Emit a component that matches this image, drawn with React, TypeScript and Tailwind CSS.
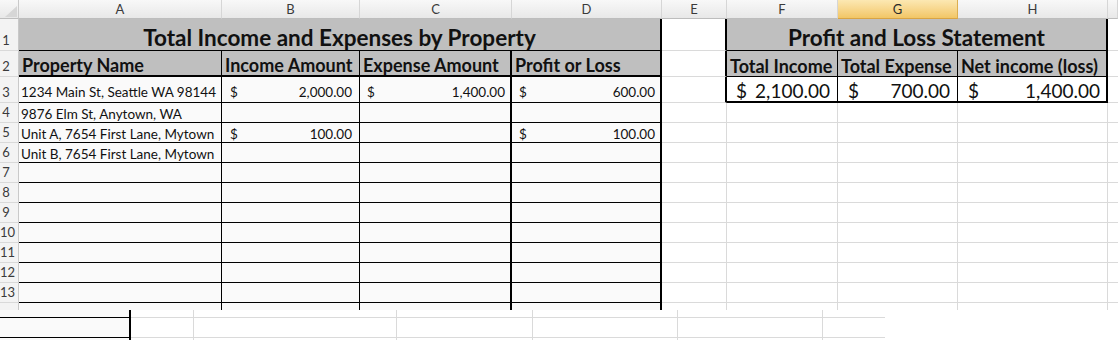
import React from "react";

const HDR =
  "flex items-center justify-center pt-[2px] border-r border-b border-r-[#d6d6d6] border-b-[#bdbdbd] bg-linear-to-b from-[#f8f8f8] to-[#e8e8e8] text-[13px] text-[#3a3a3a]";
const HDR_SEL =
  "flex items-center justify-center pt-[2px] border-r border-b border-r-[#dcae4f] border-b-[#d9a443] bg-linear-to-b from-[#fce8b2] to-[#f2c665] text-[13px] text-[#2a2a2a]";
const RH =
  "flex items-end justify-start pl-0 border-r border-b border-r-[#c9c9c9] border-b-[#d9d9d9] bg-[#f3f3f3] text-[13px] text-[#3a3a3a] leading-none";
const LIGHT = "border-r border-b border-r-[#dadada] border-b-[#dadada] bg-white";
const LIGHT_B = "border-b border-b-[#dadada] bg-white";
const GRAY = "bg-[#bfbfbf]";
const H2 = "flex items-end pl-[3px] pb-[1px] text-[18px] font-bold text-[#111] leading-none whitespace-nowrap";

function RowNum({ n }: { n: number }) {
  return (
    <div className={RH}>
      <span className="w-[12px] text-center pb-[3px] inline-block">{n}</span>
    </div>
  );
}

function Money({ v, cls }: { v: string; cls: string }) {
  return (
    <div className={cls}>
      <span>$</span>
      <span>{v}</span>
    </div>
  );
}

export default function App() {
  const emptyRows = [7, 8, 9, 10, 11, 12, 13];
  const dataBase = "bg-[#fafafa] border-b border-b-black flex items-end pb-[1px] text-[13.5px] leading-none text-[#111]";
  const aCls = dataBase + " border-r border-r-black pl-[2px] whitespace-nowrap overflow-hidden";
  const bCls = dataBase + " border-r border-r-black";
  const cdCls = dataBase + " border-r-2 border-r-black";

  return (
    <div className="w-[1118px] h-[340px] overflow-hidden bg-white font-['Lato',sans-serif]">
      <div className="grid grid-cols-[19px_203px_138px_152px_150px_65px_111px_120px_150px_10px] grid-rows-[19px_32px_26px_26px_repeat(10,20px)_7px]">
        {/* column headers */}
        <div className="relative border-r border-b border-r-[#c9c9c9] border-b-[#bdbdbd] bg-linear-to-b from-[#f8f8f8] to-[#e8e8e8]">
          <svg className="absolute left-[5px] top-[6px]" width="12" height="11" viewBox="0 0 12 11">
            <polygon points="12,0 12,11 0,11" fill="#d6d6d6" />
          </svg>
        </div>
        <div className={HDR}>A</div>
        <div className={HDR}>B</div>
        <div className={HDR}>C</div>
        <div className={HDR}>D</div>
        <div className={HDR}>E</div>
        <div className={HDR}>F</div>
        <div className={HDR_SEL}>G</div>
        <div className={HDR}>H</div>
        <div className={HDR}></div>

        {/* row 1 */}
        <RowNum n={1} />
        <div className={`col-span-4 ${GRAY} border-b border-b-black border-r-2 border-r-black flex items-end justify-center text-[22.5px] font-bold text-[#111] leading-none`}>
          <span className="pb-[1px]">Total Income and Expenses by Property</span>
        </div>
        <div className="border-r-2 border-r-black border-b border-b-[#dadada] bg-white"></div>
        <div className={`col-span-3 ${GRAY} border-b border-b-black border-r-2 border-r-black flex items-end justify-center text-[22.5px] font-bold text-[#111] leading-none`}>
          <span className="pb-[1px]">Profit and Loss Statement</span>
        </div>
        <div className={LIGHT_B}></div>

        {/* row 2 */}
        <RowNum n={2} />
        <div className={`${GRAY} border-r border-r-black border-b-2 border-b-black ${H2}`}>Property Name</div>
        <div className={`${GRAY} border-r border-r-black border-b-2 border-b-black ${H2}`}>Income Amount</div>
        <div className={`${GRAY} border-r-2 border-r-black border-b-2 border-b-black ${H2}`}>Expense Amount</div>
        <div className={`${GRAY} border-r-2 border-r-black border-b-2 border-b-black ${H2}`}>Profit or Loss</div>
        <div className="border-r-2 border-r-black border-b border-b-[#dadada] bg-white"></div>
        <div className={`${GRAY} border-r border-r-black border-b border-b-black ${H2} pl-[2px]`}>Total Income</div>
        <div className={`${GRAY} border-r border-r-black border-b border-b-black ${H2} pl-[2px]`}>Total Expense</div>
        <div className={`${GRAY} border-r-2 border-r-black border-b border-b-black ${H2} pl-[2px]`}>Net income (loss)</div>
        <div className={LIGHT_B}></div>

        {/* row 3 */}
        <RowNum n={3} />
        <div className={aCls + " pb-[3px]"}>1234 Main St, Seattle WA 98144</div>
        <Money v="2,000.00" cls={bCls + " justify-between pl-[8px] pr-[7px] pb-[3px]"} />
        <Money v="1,400.00" cls={cdCls + " justify-between pl-[7px] pr-[5px] pb-[3px]"} />
        <Money v="600.00" cls={cdCls + " justify-between pl-[7px] pr-[5px] pb-[3px]"} />
        <div className="border-r-2 border-r-black border-b border-b-[#dadada] bg-white"></div>
        <Money v="2,100.00" cls="bg-white border-r border-r-black border-b-2 border-b-black flex items-end justify-between pl-[9px] pr-[7px] pb-[1px] text-[19px] text-[#111] leading-none" />
        <Money v="700.00" cls="bg-white border-r border-r-black border-b-2 border-b-black flex items-end justify-between pl-[10px] pr-[7px] pb-[1px] text-[19px] text-[#111] leading-none" />
        <Money v="1,400.00" cls="bg-white border-r-2 border-r-black border-b-2 border-b-black flex items-end justify-between pl-[10px] pr-[6px] pb-[1px] text-[19px] text-[#111] leading-none" />
        <div className={LIGHT_B}></div>

        {/* row 4 */}
        <RowNum n={4} />
        <div className={aCls}>9876 Elm St, Anytown, WA</div>
        <div className={bCls}></div>
        <div className={cdCls}></div>
        <div className={cdCls}></div>
        <div className={LIGHT}></div>
        <div className={LIGHT}></div>
        <div className={LIGHT}></div>
        <div className={LIGHT}></div>
        <div className={LIGHT_B}></div>

        {/* row 5 */}
        <RowNum n={5} />
        <div className={aCls}>Unit A, 7654 First Lane, Mytown</div>
        <Money v="100.00" cls={bCls + " justify-between pl-[8px] pr-[7px]"} />
        <div className={cdCls}></div>
        <Money v="100.00" cls={cdCls + " justify-between pl-[7px] pr-[5px]"} />
        <div className={LIGHT}></div>
        <div className={LIGHT}></div>
        <div className={LIGHT}></div>
        <div className={LIGHT}></div>
        <div className={LIGHT_B}></div>

        {/* row 6 */}
        <RowNum n={6} />
        <div className={aCls}>Unit B, 7654 First Lane, Mytown</div>
        <div className={bCls}></div>
        <div className={cdCls}></div>
        <div className={cdCls}></div>
        <div className={LIGHT}></div>
        <div className={LIGHT}></div>
        <div className={LIGHT}></div>
        <div className={LIGHT}></div>
        <div className={LIGHT_B}></div>

        {emptyRows.map((n) => (
          <React.Fragment key={n}>
            <RowNum n={n} />
            <div className={aCls}></div>
            <div className={bCls}></div>
            <div className={cdCls}></div>
            <div className={cdCls}></div>
            <div className={LIGHT}></div>
            <div className={LIGHT}></div>
            <div className={LIGHT}></div>
            <div className={LIGHT}></div>
            <div className={LIGHT_B}></div>
          </React.Fragment>
        ))}

        {/* stub row */}
        <div className="border-r border-r-[#c9c9c9] bg-[#f3f3f3]"></div>
        <div className="bg-[#fafafa] border-r border-r-black"></div>
        <div className="bg-[#fafafa] border-r border-r-black"></div>
        <div className="bg-[#fafafa] border-r-2 border-r-black"></div>
        <div className="bg-[#fafafa] border-r-2 border-r-black"></div>
        <div className="border-r border-r-[#dadada]"></div>
        <div className="border-r border-r-[#dadada]"></div>
        <div className="border-r border-r-[#dadada]"></div>
        <div className="border-r border-r-[#dadada]"></div>
        <div></div>
      </div>

      {/* bottom strip */}
      <div className="grid grid-cols-[131px_63px_203px_136px_145px_145px_62px_1fr] grid-rows-[8px_20px_2px]">
        <div className="bg-[#fafafa] border-r-2 border-r-black border-b border-b-black"></div>
        <div className={LIGHT}></div>
        <div className={LIGHT}></div>
        <div className={LIGHT}></div>
        <div className={LIGHT}></div>
        <div className={LIGHT}></div>
        <div className={LIGHT_B}></div>
        <div></div>

        <div className="bg-[#fafafa] border-r-2 border-r-black border-b border-b-black"></div>
        <div className={LIGHT}></div>
        <div className={LIGHT}></div>
        <div className={LIGHT}></div>
        <div className={LIGHT}></div>
        <div className={LIGHT}></div>
        <div className={LIGHT_B}></div>
        <div></div>

        <div className="bg-[#fafafa] border-r-2 border-r-black"></div>
        <div className="border-r border-r-[#dadada]"></div>
        <div className="border-r border-r-[#dadada]"></div>
        <div className="border-r border-r-[#dadada]"></div>
        <div className="border-r border-r-[#dadada]"></div>
        <div className="border-r border-r-[#dadada]"></div>
        <div></div>
        <div></div>
      </div>
    </div>
  );
}
